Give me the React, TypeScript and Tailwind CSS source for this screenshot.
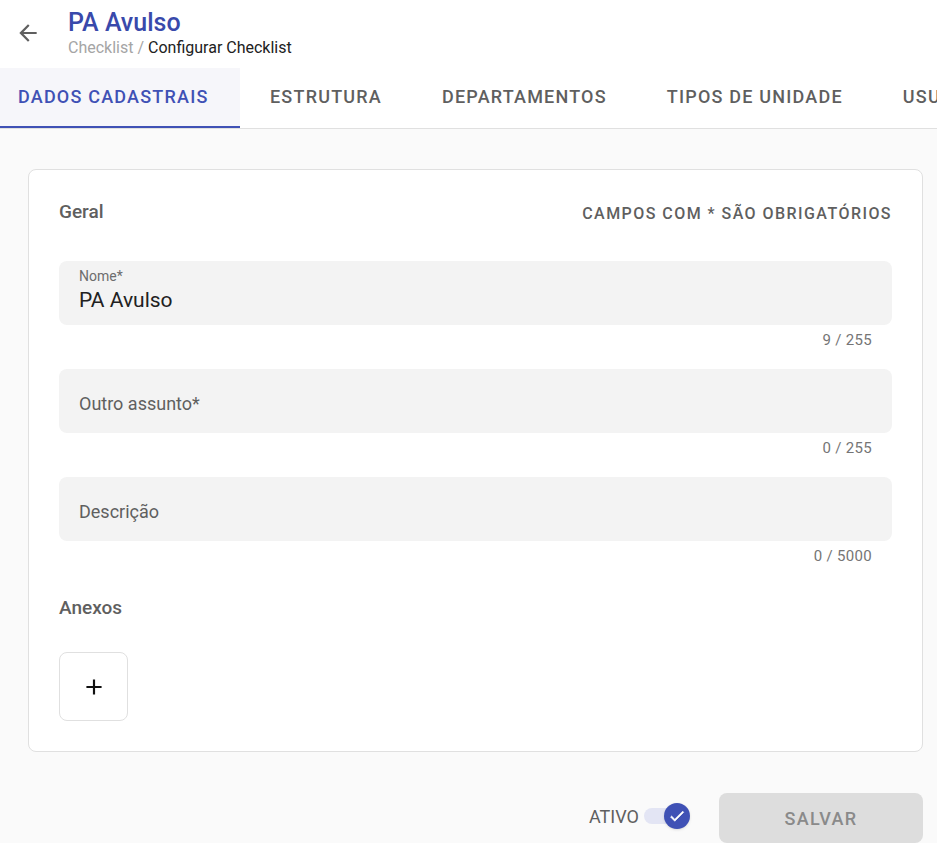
import React from "react";

function Field({ label, value, counter }: { label: string; value?: string; counter: string }) {
  return (
    <div className="flex flex-col">
      <div className="h-[64px] rounded-[8px] bg-[#f3f3f3] px-[20px] flex flex-col">
        {value ? (
          <>
            <div className="pt-[7px] text-[14px] leading-[16px] text-[#6d6d6d]">{label}</div>
            <div className="mt-[4px] text-[21px] leading-[24px] text-[#212121]">{value}</div>
          </>
        ) : (
          <div className="pt-[24px] text-[18px] leading-[22px] text-[#5f5f5f]">{label}</div>
        )}
      </div>
      <div className="h-[44px] flex justify-end pr-[20px] pt-[6px]">
        <span className="text-[15px] leading-[18px] text-[#757575] tracking-[0.3px]">{counter}</span>
      </div>
    </div>
  );
}

export default function App() {
  const tabs = ["ESTRUTURA", "DEPARTAMENTOS", "TIPOS DE UNIDADE", "USUÁRIOS"];
  return (
    <div className="w-[937px] h-[843px] overflow-hidden bg-[#fafafa]" style={{ fontFamily: "Roboto, 'Liberation Sans', sans-serif" }}>
      {/* Header */}
      <div className="bg-white">
        <div className="h-[68px] flex items-start">
          <div className="w-[68px] h-[68px] flex items-start pt-[20px] pl-[15px]">
            <svg width="26" height="26" viewBox="0 0 24 24" fill="#5f5f5f">
              <path d="M20 11H7.83l5.59-5.59L12 4l-8 8 8 8 1.41-1.41L7.83 13H20v-2z" />
            </svg>
          </div>
          <div className="pt-[8px]">
            <div className="text-[25px] leading-[30px] font-medium text-[#3949ab]">PA Avulso</div>
            <div className="text-[16px] leading-[20px]">
              <span className="text-[#a5a5a5]">Checklist / </span>
              <span className="text-[#212121]">Configurar Checklist</span>
            </div>
          </div>
        </div>
        {/* Tabs */}
        <div className="h-[61px] flex border-b border-[#e0e0e0] overflow-hidden whitespace-nowrap">
          <div className="w-[240px] shrink-0 h-[60px] bg-[#f6f6fa] border-b-2 border-[#3f51b5] flex items-center pl-[18px] pb-[1px] text-[18px] font-medium tracking-[1.2px] text-[#3f51b5]">
            DADOS CADASTRAIS
          </div>
          {tabs.map((t) => (
            <div key={t} className="shrink-0 h-[60px] px-[30px] pb-[3px] flex items-center text-[18px] font-medium tracking-[1.2px] text-[#5f5f5f]">
              {t}
            </div>
          ))}
        </div>
      </div>

      {/* Body */}
      <div className="pl-[28px] pt-[40px] pr-[14px]">
        <div className="bg-white border border-[#e0e0e0] rounded-[8px] px-[30px] pt-[29px] pb-[30px]">
          <div className="flex items-center justify-between h-[26px]">
            <span className="text-[19px] font-medium text-[#5f5f5f]">Geral</span>
            <span className="text-[16px] font-medium tracking-[1.45px] text-[#5f5f5f] mt-[4px]">CAMPOS COM * SÃO OBRIGATÓRIOS</span>
          </div>
          <div className="mt-[36px] flex flex-col">
            <Field label="Nome*" value="PA Avulso" counter="9 / 255" />
            <Field label="Outro assunto*" counter="0 / 255" />
            <Field label="Descrição" counter="0 / 5000" />
          </div>
          <div className="text-[19px] font-medium text-[#5f5f5f] leading-[22px] mt-[12px]">Anexos</div>
          <div className="mt-[33px] w-[69px] h-[69px] border border-[#e0e0e0] rounded-[8px] flex items-center justify-center">
            <svg width="26" height="26" viewBox="0 0 24 24" fill="#111">
              <path d="M19 13h-6v6h-2v-6H5v-2h6V5h2v6h6v2z" />
            </svg>
          </div>
        </div>

        {/* Footer */}
        <div className="flex justify-end items-center mt-[41px] gap-[29px]">
          <div className="flex items-center gap-[5px] mt-[-4px]">
            <span className="text-[18px] text-[#5f5f5f]">ATIVO</span>
            <div className="relative w-[46px] h-[26px] flex items-center">
              <div className="w-[40px] h-[16px] rounded-full bg-[#e3e5f4]" />
              <div className="absolute right-0 top-0 w-[26px] h-[26px] rounded-full bg-[#3f51b5] flex items-center justify-center shadow">
                <svg width="18" height="18" viewBox="0 0 24 24" fill="white">
                  <path d="M9 16.17L4.83 12l-1.42 1.41L9 19 21 7l-1.41-1.41z" stroke="white" strokeWidth="0.8" />
                </svg>
              </div>
            </div>
          </div>
          <div className="w-[204px] h-[50px] rounded-[8px] bg-[#dddddd] flex items-center justify-center text-[18px] font-medium tracking-[1.3px] text-[#8a8a8a]">
            SALVAR
          </div>
        </div>
      </div>
    </div>
  );
}
